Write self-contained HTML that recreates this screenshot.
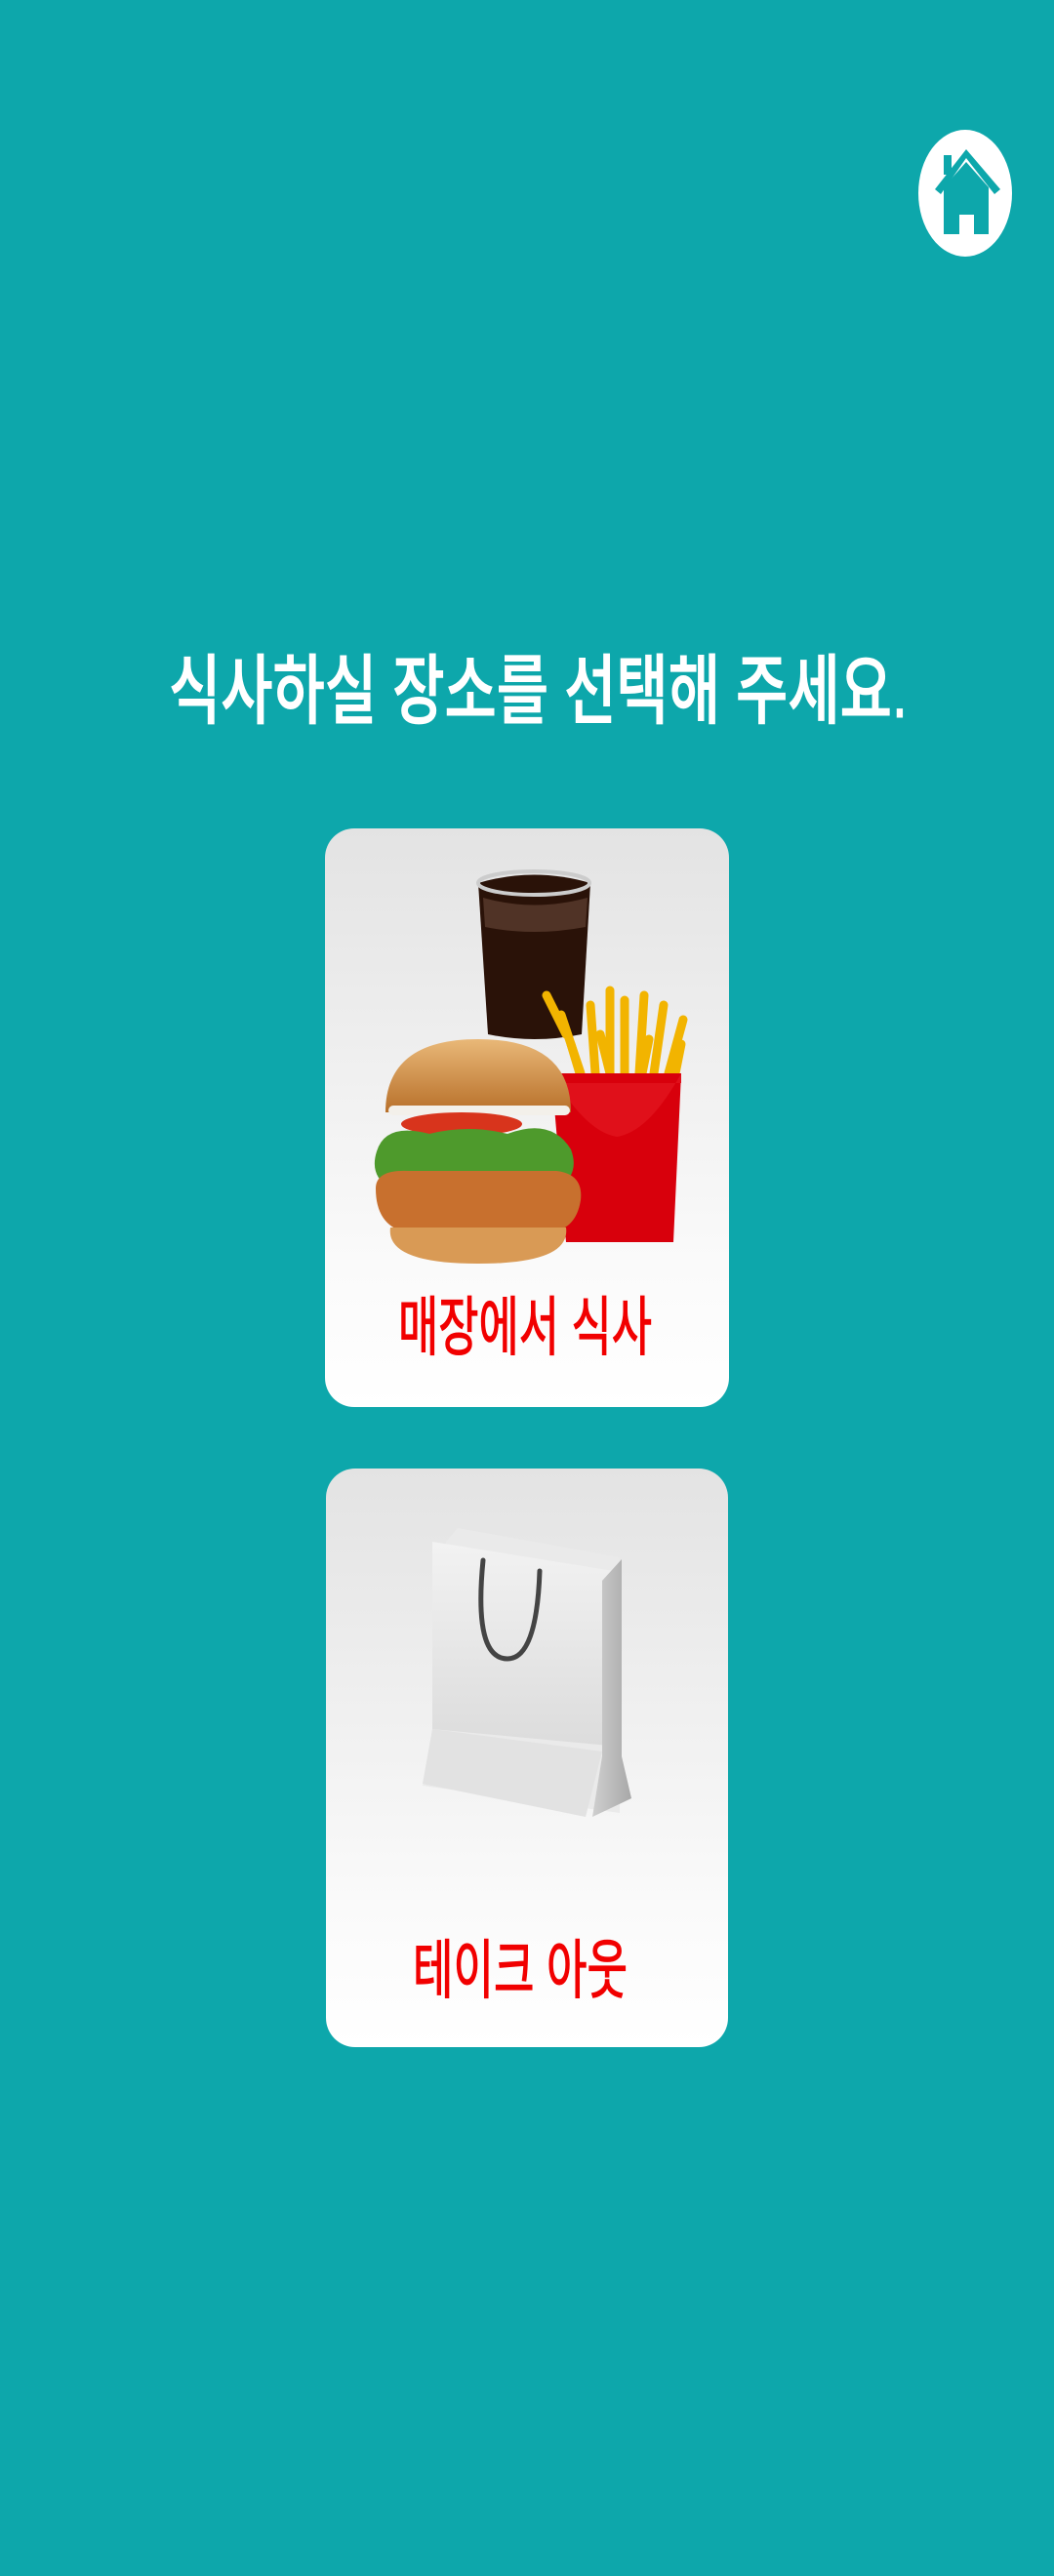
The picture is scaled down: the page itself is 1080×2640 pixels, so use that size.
<!DOCTYPE html>
<html><head><meta charset="utf-8"><style>
html,body{margin:0;padding:0;background:#0da7ab;}
svg{display:block}
</style></head><body>
<svg width="1080" height="2640" viewBox="0 0 1080 2640" xmlns="http://www.w3.org/2000/svg">
<defs>
<linearGradient id="cg" x1="0" y1="0" x2="0" y2="1"><stop offset="0" stop-color="#e3e3e3"/><stop offset="0.75" stop-color="#fafafa"/><stop offset="1" stop-color="#ffffff"/></linearGradient>
<linearGradient id="bun" x1="0" y1="0" x2="0" y2="1"><stop offset="0" stop-color="#e9b878"/><stop offset="1" stop-color="#b8702a"/></linearGradient>
<linearGradient id="bagf" x1="0" y1="0" x2="0" y2="1"><stop offset="0" stop-color="#f2f2f2"/><stop offset="1" stop-color="#dcdcdc"/></linearGradient>
<linearGradient id="bags" x1="0" y1="0" x2="1" y2="0"><stop offset="0" stop-color="#cfcfcf"/><stop offset="1" stop-color="#a8a8a8"/></linearGradient>
</defs>
<rect width="1080" height="2640" fill="#0da7ab"/>
<!-- home -->
<ellipse cx="989" cy="198" rx="48" ry="65" fill="#fff"/>
<g fill="#0da7ab">
<rect x="967" y="159" width="8" height="20"/>
<polygon points="958,194 990,153 1025,194 1019,199 990,162 964,199"/>
<polygon points="967,192 990,166 1013,192 1013,240 998,240 998,220 983,220 983,240 967,240"/>
</g>
<text x="173" y="735" textLength="757" lengthAdjust="spacingAndGlyphs" font-family="'Liberation Sans','Noto Sans CJK KR',sans-serif" font-size="78" font-weight="500" fill="#fff" stroke="#fff" stroke-width="1">식사하실 장소를 선택해 주세요.</text>
<!-- card1 -->
<rect x="333" y="849" width="414" height="593" rx="30" fill="url(#cg)"/>
<!-- cup -->
<path d="M490,905 Q547,888 605,905 L596,1060 Q547,1070 500,1060 Z" fill="#2a1208"/>
<ellipse cx="547" cy="905" rx="57" ry="12" fill="none" stroke="#ccc" stroke-width="4"/>
<path d="M495,920 Q547,935 602,920 L600,950 Q547,960 497,950Z" fill="#6b4a3a" opacity="0.6"/>
<!-- fries -->
<g stroke="#f2b400" stroke-width="9" stroke-linecap="round">
<line x1="580" y1="1060" x2="560" y2="1020"/><line x1="595" y1="1100" x2="575" y2="1040"/>
<line x1="610" y1="1100" x2="605" y2="1030"/><line x1="625" y1="1100" x2="625" y2="1015"/>
<line x1="640" y1="1100" x2="640" y2="1025"/><line x1="655" y1="1100" x2="660" y2="1020"/>
<line x1="670" y1="1100" x2="680" y2="1030"/><line x1="685" y1="1100" x2="700" y2="1045"/>
<line x1="635" y1="1140" x2="615" y2="1060"/><line x1="650" y1="1140" x2="665" y2="1065"/>
<line x1="600" y1="1120" x2="585" y2="1070"/><line x1="690" y1="1110" x2="698" y2="1070"/>
</g>
<path d="M565,1100 L698,1100 L690,1273 L580,1273 Z" fill="#d8000c"/>
<path d="M565,1100 Q600,1160 632,1165 Q665,1160 698,1100 L698,1110 L565,1110Z" fill="#e0101a"/>
<!-- burger -->
<path d="M395,1140 Q395,1065 490,1065 Q585,1065 585,1140 Z" fill="url(#bun)"/>
<rect x="398" y="1133" width="186" height="10" rx="5" fill="#f3f0ea"/>
<ellipse cx="473" cy="1152" rx="62" ry="12" fill="#d8341c"/>
<path d="M386,1180 Q395,1150 440,1162 Q480,1152 520,1162 Q565,1145 585,1178 Q595,1205 570,1218 L400,1218 Q378,1205 386,1180Z" fill="#4e9a2c"/>
<path d="M385,1218 Q385,1198 420,1200 L570,1200 Q598,1203 595,1230 Q590,1262 560,1263 L415,1263 Q385,1255 385,1218Z" fill="#c8702e"/>
<path d="M400,1258 L580,1258 Q585,1295 490,1295 Q395,1295 400,1258Z" fill="#d99a55"/>
<text x="408" y="1383" textLength="260" lengthAdjust="spacingAndGlyphs" font-family="'Liberation Sans','Noto Sans CJK KR',sans-serif" font-size="66" fill="#f10000" stroke="#f10000" stroke-width="1.2">매장에서 식사</text>
<!-- card2 -->
<rect x="334" y="1505" width="412" height="593" rx="30" fill="url(#cg)"/>
<polygon points="469,1566 635,1596 635,1858 433,1830 457,1715 457,1580" fill="#eaeaea"/>
<polygon points="443,1580 635,1611 635,1790 443,1772" fill="url(#bagf)"/>
<polygon points="443,1772 617,1795 600,1862 433,1828" fill="#e2e2e2"/>
<polygon points="617,1620 637,1598 637,1800 647,1843 607,1862 617,1800" fill="url(#bags)"/>
<path d="M495,1599 Q485,1700 520,1700 Q550,1700 553,1610" fill="none" stroke="#444" stroke-width="5" stroke-linecap="round"/>
<text x="423" y="2042" textLength="220" lengthAdjust="spacingAndGlyphs" font-family="'Liberation Sans','Noto Sans CJK KR',sans-serif" font-size="66" fill="#f10000" stroke="#f10000" stroke-width="1.2">테이크 아웃</text>
</svg>
</body></html>
